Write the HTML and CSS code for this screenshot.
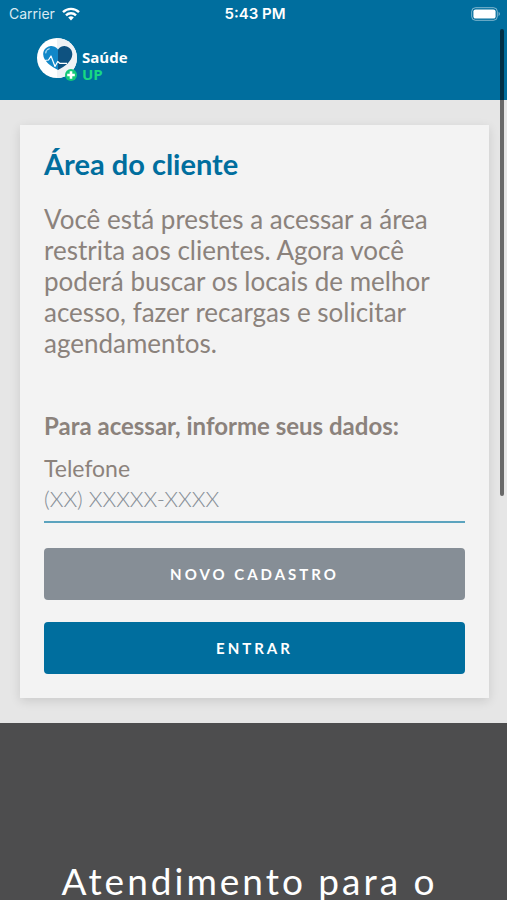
FILE: index.html
```html
<!DOCTYPE html>
<html lang="pt-BR">
<head>
<meta charset="utf-8">
<meta name="viewport" content="width=device-width, initial-scale=1">
<title>Saúde UP</title>
<link rel="stylesheet" href="styles.css">
</head>
<body>
<header class="topbar">
  <div class="status">
    <div class="carrier">
      <span>Carrier</span>
      <svg class="wifi" viewBox="0 0 18 14" aria-hidden="true">
        <g fill="none" stroke="#fff" stroke-width="2.4">
          <path d="M1 5.2a11.4 11.4 0 0 1 16 0"/>
          <path d="M4 8.3a7.1 7.1 0 0 1 10 0"/>
        </g>
        <path d="M9 13.4 6.2 10.6a4 4 0 0 1 5.6 0z" fill="#fff"/>
      </svg>
    </div>
    <time class="clock">5:43 PM</time>
    <svg class="battery" viewBox="0 0 30 14" aria-hidden="true">
      <rect x=".7" y=".7" width="25.6" height="12.6" rx="3.8" fill="none" stroke="#fff" stroke-opacity=".5"/>
      <rect x="2.4" y="2.4" width="22.2" height="9.2" rx="2.2" fill="#fff"/>
      <path d="M27.6 4.8q2.6 2.2 0 4.4z" fill="#fff" fill-opacity=".55"/>
    </svg>
  </div>
  <a class="brand" href="#">
    <svg class="logo" viewBox="0 0 42 44" aria-hidden="true">
      <circle cx="20" cy="20" r="20" fill="#fff"/>
      <path d="M20 0a20 20 0 0 1 0 40z" fill="#eef2f5"/>
      <path d="M21 11.500C18.500 8.600 15.500 7.800 13 8.200 9 8.800 6 12 6.200 16.500 6.500 23 14 28.500 21 32z" fill="#1187c8"/>
      <path d="M21 11.500c2.500-2.900 5-3.700 7.500-3.300 4 .6 7 3.800 6.800 8.300C35 23 28 28.500 21 32z" fill="#0e5280"/>
      <path d="M8.800 14.800c.2-2.400 1.800-3.900 4.200-4.200" fill="none" stroke="#b5dff3" stroke-width="1.300" stroke-linecap="round" stroke-dasharray="2 1.500"/>
      <path d="M7 22.500l4.500-.5 2.500-4 4 10.500 2.700-5 2 1.800H30" fill="none" stroke="#fff" stroke-width="1.200" stroke-linejoin="round"/>
      <circle cx="34" cy="37" r="6" fill="#12c878"/>
      <path d="M34 33.200v7.600M30.200 37h7.600" stroke="#fff" stroke-width="2.600"/>
    </svg>
    <span class="brand-name">
      <span>Saúde</span>
      <span class="brand-up">UP</span>
    </span>
  </a>
</header>

<main class="content">
  <form class="card">
    <h1 class="title">Área do cliente</h1>
    <p class="intro">Você está prestes a acessar a área restrita aos clientes. Agora você poderá buscar os locais de melhor acesso, fazer recargas e solicitar agendamentos.</p>
    <h2 class="subtitle">Para acessar, informe seus dados:</h2>
    <label class="label" for="phone">Telefone</label>
    <input class="field" id="phone" type="tel" placeholder="(XX) XXXXX-XXXX">
    <div class="actions">
      <button class="button button-muted" type="button">Novo cadastro</button>
      <button class="button" type="submit">Entrar</button>
    </div>
  </form>
</main>

<section class="support">
  <h2 class="support-title">Atendimento para o</h2>
</section>
<div class="scroll-thumb" aria-hidden="true"></div>
</body>
</html>
```

FILE: styles.css
```css
* {
  box-sizing: border-box;
}

html {
  scrollbar-width: none;
}

body {
  margin: 0;
  background: #4d4d4e;
  color: #8b827c;
  font-family: Lato, "Open Sans", sans-serif;
}

.topbar {
  height: 100px;
  background: #006e9e;
  color: #fff;
}

.status {
  display: grid;
  grid-template-columns: 1fr auto 1fr;
  align-items: center;
  height: 27px;
  padding: 0 6px 0 9px;
  font-family: Inter, sans-serif;
  font-size: 14px;
}

.carrier {
  display: flex;
  align-items: center;
  gap: 7px;
  color: #d9eaf2;
}

.wifi {
  width: 18px;
  height: 14px;
}

.clock {
  font-size: 15px;
  font-weight: 600;
}

.battery {
  width: 30px;
  height: 14px;
  justify-self: end;
}

.brand {
  display: inline-flex;
  align-items: flex-start;
  gap: 3px;
  margin: 11px 0 0 37px;
  color: #fff;
  text-decoration: none;
}

.logo {
  width: 42px;
  height: 44px;
}

.brand-name {
  display: flex;
  flex-direction: column;
  padding-top: 11px;
  font: 700 15px/17px "Open Sans", sans-serif;
}

.brand-up {
  color: #18d982;
}

.content {
  padding: 25px 18px 25px 20px;
  background: #e6e6e6;
}

.card {
  padding: 24px;
  background: #f3f3f3;
  box-shadow: 0 3px 10px rgba(0, 0, 0, 0.12);
}

.title {
  margin: 0 0 25px;
  color: #006e9e;
  font-size: 29px;
  font-weight: 700;
  line-height: 30px;
}

.intro {
  margin: 0 0 53px;
  font-size: 26px;
  font-weight: 400;
  line-height: 31px;
}

.subtitle {
  margin: 0 0 14px;
  font-size: 24px;
  font-weight: 700;
  line-height: 28px;
}

.label {
  display: block;
  font-size: 23px;
  line-height: 28px;
}

.field {
  display: block;
  width: 100%;
  height: 41px;
  padding: 0 0 7px;
  border: 0;
  border-bottom: 2px solid #5ba3be;
  border-radius: 0;
  outline: 0;
  background: transparent;
  color: #8b827c;
  font: 300 22px/32px Lato, sans-serif;
}

.field::placeholder {
  color: #868e96;
  opacity: 1;
}

.actions {
  display: grid;
  gap: 22px;
  margin-top: 25px;
}

.button {
  height: 52px;
  border: 0;
  border-radius: 4px;
  background: #006e9e;
  color: #fff;
  font: 700 15px/24px Lato, sans-serif;
  letter-spacing: 3px;
  text-transform: uppercase;
}

.button-muted {
  background: #868e96;
}

.support {
  padding: 136px 32px 24px 24px;
  color: #fff;
  text-align: center;
}

.support-title {
  margin: 0;
  font-size: 37px;
  font-weight: 400;
  line-height: 44px;
  letter-spacing: 3px;
}

.scroll-thumb {
  position: absolute;
  top: 29px;
  right: 3px;
  width: 4px;
  height: 467px;
  border-radius: 2px;
  background: rgba(0, 0, 0, 0.55);
}
```
